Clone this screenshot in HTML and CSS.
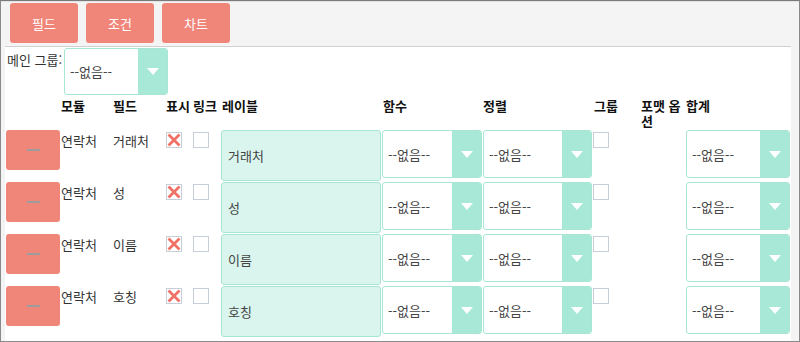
FILE: index.html
```html
<!DOCTYPE html>
<html lang="ko">
<head>
<meta charset="utf-8">
<link rel="stylesheet" href="styles.css">
</head>
<body>
<div class="frame">
  <div class="toolbar">
    <button class="tbtn">필드</button>
    <button class="tbtn">조건</button>
    <button class="tbtn">차트</button>
  </div>
  <div class="panel">
    <div class="main-group">
      <span class="mg-label">메인 그룹:</span>
      <div class="sel sel-main"><span class="sel-text">--없음--</span><span class="sel-arrow"><i class="tri"></i></span></div>
    </div>
    <div class="grid head">
      <div></div>
      <div>모듈</div>
      <div>필드</div>
      <div>표시</div>
      <div>링크</div>
      <div class="h-label">레이블</div>
      <div class="h-func">함수</div>
      <div>정렬</div>
      <div class="h-group">그룹</div>
      <div>포맷 옵션</div>
      <div>합계</div>
    </div>

    <div class="grid row">
      <div><button class="rm"><span class="dash"></span></button></div>
      <div class="txt">연락처</div>
      <div class="txt">거래처</div>
      <div><span class="cb checked"><svg viewBox="0 0 16 16" width="16" height="16"><path d="M3.5 3.5L12.5 12.5M12.5 3.5L3.5 12.5" stroke="#f07266" stroke-width="2.8" stroke-linecap="square"/></svg></span></div>
      <div><span class="cb"></span></div>
      <div><div class="lbl">거래처</div></div>
      <div><div class="sel sel-func"><span class="sel-text">--없음--</span><span class="sel-arrow"><i class="tri"></i></span></div></div>
      <div><div class="sel sel-sort"><span class="sel-text">--없음--</span><span class="sel-arrow"><i class="tri"></i></span></div></div>
      <div><span class="cb"></span></div>
      <div></div>
      <div><div class="sel sel-sum"><span class="sel-text">--없음--</span><span class="sel-arrow"><i class="tri"></i></span></div></div>
    </div>

    <div class="grid row">
      <div><button class="rm"><span class="dash"></span></button></div>
      <div class="txt">연락처</div>
      <div class="txt">성</div>
      <div><span class="cb checked"><svg viewBox="0 0 16 16" width="16" height="16"><path d="M3.5 3.5L12.5 12.5M12.5 3.5L3.5 12.5" stroke="#f07266" stroke-width="2.8" stroke-linecap="square"/></svg></span></div>
      <div><span class="cb"></span></div>
      <div><div class="lbl">성</div></div>
      <div><div class="sel sel-func"><span class="sel-text">--없음--</span><span class="sel-arrow"><i class="tri"></i></span></div></div>
      <div><div class="sel sel-sort"><span class="sel-text">--없음--</span><span class="sel-arrow"><i class="tri"></i></span></div></div>
      <div><span class="cb"></span></div>
      <div></div>
      <div><div class="sel sel-sum"><span class="sel-text">--없음--</span><span class="sel-arrow"><i class="tri"></i></span></div></div>
    </div>

    <div class="grid row">
      <div><button class="rm"><span class="dash"></span></button></div>
      <div class="txt">연락처</div>
      <div class="txt">이름</div>
      <div><span class="cb checked"><svg viewBox="0 0 16 16" width="16" height="16"><path d="M3.5 3.5L12.5 12.5M12.5 3.5L3.5 12.5" stroke="#f07266" stroke-width="2.8" stroke-linecap="square"/></svg></span></div>
      <div><span class="cb"></span></div>
      <div><div class="lbl">이름</div></div>
      <div><div class="sel sel-func"><span class="sel-text">--없음--</span><span class="sel-arrow"><i class="tri"></i></span></div></div>
      <div><div class="sel sel-sort"><span class="sel-text">--없음--</span><span class="sel-arrow"><i class="tri"></i></span></div></div>
      <div><span class="cb"></span></div>
      <div></div>
      <div><div class="sel sel-sum"><span class="sel-text">--없음--</span><span class="sel-arrow"><i class="tri"></i></span></div></div>
    </div>

    <div class="grid row">
      <div><button class="rm"><span class="dash"></span></button></div>
      <div class="txt">연락처</div>
      <div class="txt">호칭</div>
      <div><span class="cb checked"><svg viewBox="0 0 16 16" width="16" height="16"><path d="M3.5 3.5L12.5 12.5M12.5 3.5L3.5 12.5" stroke="#f07266" stroke-width="2.8" stroke-linecap="square"/></svg></span></div>
      <div><span class="cb"></span></div>
      <div><div class="lbl">호칭</div></div>
      <div><div class="sel sel-func"><span class="sel-text">--없음--</span><span class="sel-arrow"><i class="tri"></i></span></div></div>
      <div><div class="sel sel-sort"><span class="sel-text">--없음--</span><span class="sel-arrow"><i class="tri"></i></span></div></div>
      <div><span class="cb"></span></div>
      <div></div>
      <div><div class="sel sel-sum"><span class="sel-text">--없음--</span><span class="sel-arrow"><i class="tri"></i></span></div></div>
    </div>
  </div>
</div>
</body>
</html>
```

FILE: styles.css
```css
* { box-sizing: border-box; }
html, body { margin: 0; padding: 0; }
body {
  font-family: "Noto Sans CJK KR", "Noto Sans", sans-serif;
  font-size: 13px;
  color: #333;
  background: #fff;
}
.frame {
  width: 800px;
  height: 342px;
  border: 1px solid #8a8a8a;
  border-top-color: #7a7a7a;
  background: #f4f4f4;
  display: flex;
  flex-direction: column;
  overflow: hidden;
}
.toolbar {
  display: flex;
  gap: 8px;
  padding: 2px 0 0 9px;
  height: 45px;
  border-top: 1px solid #e2e2e2;
}
.tbtn {
  width: 68px;
  height: 40px;
  border: none;
  border-radius: 3px;
  background: #f08579;
  color: #fff;
  font-family: inherit;
  font-size: 13px;
  padding: 0;
  margin-top: -1px;
}
.panel {
  flex: 1;
  margin: 0 8px 0 4px;
  background: #fff;
  border-top: 1px solid #d0d0d0;
  padding: 1px 0 0 1px;
}
.main-group {
  display: flex;
  align-items: flex-start;
}
.mg-label {
  padding: 3px 0 0 1px;
  line-height: 17px;
  width: 58px;
  white-space: nowrap;
}
.sel {
  display: flex;
  border: 1px solid #a8e6d4;
  border-radius: 3px;
  background: #fff;
  overflow: hidden;
  color: #444;
}
.sel-text {
  flex: 1;
  display: flex;
  align-items: center;
  padding-left: 5px;
  white-space: nowrap;
}
.sel-arrow {
  width: 29px;
  background: #a8e8d6;
  display: flex;
  align-items: center;
  justify-content: center;
}
.tri {
  width: 0;
  height: 0;
  border-left: 6px solid transparent;
  border-right: 6px solid transparent;
  border-top: 7px solid #fff;
}
.sel-main { width: 104px; height: 47px; }
.sel-main .sel-text { padding-left: 5px; }
.grid {
  display: grid;
  grid-template-columns: 55px 52px 53px 27px 28px 161px 101px 110px 48px 45px 104px;
}
.head {
  height: 35px;
  font-weight: bold;
  color: #111;
  line-height: 15px;
  padding-top: 3px;
}
.h-label { padding-left: 1px; }
.h-func { padding-left: 1px; }
.h-group { padding-left: 1px; }
.row {
  height: 52px;
  align-items: start;
}
.txt {
  line-height: 17px;
  padding-top: 2px;
  white-space: nowrap;
}
.rm {
  width: 54px;
  height: 40px;
  border: none;
  border-radius: 3px;
  background: #f08579;
  padding: 0;
  display: flex;
  align-items: center;
  justify-content: center;
}
.dash {
  display: block;
  width: 13px;
  height: 2px;
  background: #9c9c9c;
}
.cb {
  display: block;
  width: 16px;
  height: 16px;
  margin-top: 2px;
  border: 1px solid #c6ced8;
  background: #fff;
  position: relative;
}
.cb svg {
  position: absolute;
  left: -1px;
  top: -1px;
}
.lbl {
  width: 160px;
  height: 51px;
  background: #d9f5ee;
  border: 1px solid #a8e6d4;
  border-radius: 3px;
  display: flex;
  align-items: center;
  padding-left: 6px;
  color: #444;
}
.sel-func { width: 100px; height: 48px; }
.sel-sort { width: 109px; height: 48px; }
.sel-sum { width: 104px; height: 48px; }
```
